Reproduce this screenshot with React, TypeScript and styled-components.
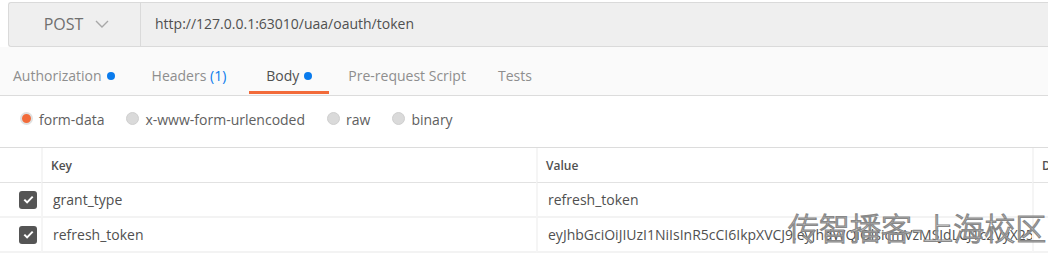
import React from 'react';
import styled, { createGlobalStyle } from 'styled-components';

const GlobalStyle = createGlobalStyle`
  html, body {
    margin: 0;
    padding: 0;
    background: #ffffff;
  }
  body {
    font-family: "Open Sans", "Noto Sans", sans-serif;
  }
`;

const Page = styled.div`
  position: relative;
  width: 1048px;
  height: 253px;
  overflow: hidden;
  padding-top: 2px;
  box-sizing: border-box;
`;

const UrlBar = styled.div`
  display: flex;
  align-items: stretch;
  height: 43px;
  margin-left: 8px;
  background: #efefef;
  border: 1px solid #dadada;
  border-right: none;
  border-radius: 3px 0 0 3px;
`;

const MethodSelect = styled.div`
  display: flex;
  align-items: center;
  justify-content: center;
  gap: 12px;
  width: 132px;
  border-right: 1px solid #dadada;
  font-size: 16px;
  color: #707070;
  padding-left: 4px;
  padding-bottom: 2px;
  box-sizing: border-box;
`;

const UrlText = styled.div`
  display: flex;
  align-items: center;
  padding-left: 14px;
  padding-bottom: 2px;
  font-size: 14px;
  color: #505050;
`;

const Tabs = styled.div`
  display: flex;
  align-items: stretch;
  height: 48px;
  background: #fafafa;
  border-bottom: 1px solid #dcdcdc;
  padding-left: 13px;
  box-sizing: content-box;
`;

const Tab = styled.div<{ $active?: boolean; $gap: number }>`
  position: relative;
  display: flex;
  align-items: center;
  gap: 5px;
  padding-top: 8px;
  margin-right: ${p => p.$gap}px;
  font-size: 14px;
  color: ${p => (p.$active ? '#505050' : '#8e8e8e')};
  ${p =>
    p.$active &&
    `
    &::after {
      content: '';
      position: absolute;
      left: -17px;
      right: -17px;
      bottom: 1px;
      height: 3px;
      background: #f26b3a;
    }
  `}
`;

const Dot = styled.span`
  width: 8px;
  height: 8px;
  border-radius: 50%;
  background: #097bed;
  margin-top: 1px;
`;

const Count = styled.span`
  color: #097bed;
`;

const BodyModes = styled.div`
  display: flex;
  align-items: center;
  height: 52px;
  padding-left: 20px;
  padding-bottom: 4px;
  box-sizing: border-box;
  border-bottom: 1px solid #dcdcdc;
  gap: 22px;
`;

const Radio = styled.label<{ $checked?: boolean }>`
  display: flex;
  align-items: center;
  gap: 6px;
  font-size: 14px;
  color: #606060;

  &::before {
    content: '';
    width: 13px;
    height: 13px;
    border-radius: 50%;
    box-sizing: border-box;
    background: ${p => (p.$checked ? '#f26b3a' : '#dadada')};
    border: ${p => (p.$checked ? '2px solid #e0e0e0' : '1px solid #cfcfcf')};
    margin-top: -3px;
  }
`;

const Table = styled.div`
  display: grid;
  grid-template-columns: 41px 495px 496px 1fr;
`;

const Cell = styled.div<{ $head?: boolean; $first?: boolean }>`
  display: flex;
  align-items: center;
  height: ${p => (p.$head ? '34px' : '33px')};
  padding-left: ${p => (p.$first ? '0' : p.$head ? '8px' : '10px')};
  justify-content: ${p => (p.$first ? 'flex-end' : 'flex-start')};
  padding-right: ${p => (p.$first ? '4px' : '0')};
  border-left: ${p => (p.$first ? 'none' : '2px solid #f5f5f5')};
  border-bottom: ${p => (p.$head ? '1px solid #e2e2e2' : '2px solid #f3f3f3')};
  font-size: ${p => (p.$head ? '12px' : '14px')};
  font-weight: ${p => (p.$head ? 600 : 400)};
  color: #505050;
  white-space: nowrap;
  overflow: hidden;
`;

const CheckBox = styled.span`
  display: flex;
  align-items: center;
  justify-content: center;
  width: 18px;
  height: 18px;
  border-radius: 3px;
  background: #555555;
`;

const Watermark = styled.div`
  position: absolute;
  left: 788px;
  top: 204px;
  font-family: "Noto Sans CJK SC", sans-serif;
  font-size: 31px;
  font-weight: 300;
  color: rgba(255, 255, 255, 0.6);
  -webkit-text-stroke: 1.2px #888888;
  pointer-events: none;
  white-space: nowrap;
`;

function Chevron() {
  return (
    <svg width="14" height="8" viewBox="0 0 14 8" fill="none">
      <path d="M1 1l6 6 6-6" stroke="#a8a8a8" strokeWidth="1.4" />
    </svg>
  );
}

function Check() {
  return (
    <svg width="11" height="9" viewBox="0 0 11 9" fill="none">
      <path d="M1.3 4.6l2.8 2.8L9.7 1.6" stroke="#ffffff" strokeWidth="2" />
    </svg>
  );
}

const rows = [
  { key: 'grant_type', value: 'refresh_token' },
  {
    key: 'refresh_token',
    value: 'eyJhbGciOiJIUzI1NiIsInR5cCI6IkpXVCJ9.eyJhdWQiOlsicmVzMSJdLCJ1c2VyX25hbWUiOiJ7XCJ',
  },
];

export default function App() {
  return (
    <>
      <GlobalStyle />
      <Page>
        <UrlBar>
          <MethodSelect>
            <span>POST</span>
            <Chevron />
          </MethodSelect>
          <UrlText>http://127.0.0.1:63010/uaa/oauth/token</UrlText>
        </UrlBar>

        <Tabs>
          <Tab $gap={37}>
            Authorization <Dot />
          </Tab>
          <Tab $gap={40}>
            <span>
              Headers <Count>(1)</Count>
            </span>
          </Tab>
          <Tab $gap={36} $active>
            Body <Dot />
          </Tab>
          <Tab $gap={32}>Pre-request Script</Tab>
          <Tab $gap={0}>Tests</Tab>
        </Tabs>

        <BodyModes>
          <Radio $checked>form-data</Radio>
          <Radio>x-www-form-urlencoded</Radio>
          <Radio>raw</Radio>
          <Radio>binary</Radio>
        </BodyModes>

        <Table>
          <Cell $head $first />
          <Cell $head>Key</Cell>
          <Cell $head>Value</Cell>
          <Cell $head>Description</Cell>
          {rows.map(r => (
            <React.Fragment key={r.key}>
              <Cell $first>
                <CheckBox>
                  <Check />
                </CheckBox>
              </Cell>
              <Cell>{r.key}</Cell>
              <Cell>{r.value}</Cell>
              <Cell />
            </React.Fragment>
          ))}
        </Table>

        <Watermark>传智播客-上海校区</Watermark>
      </Page>
    </>
  );
}
